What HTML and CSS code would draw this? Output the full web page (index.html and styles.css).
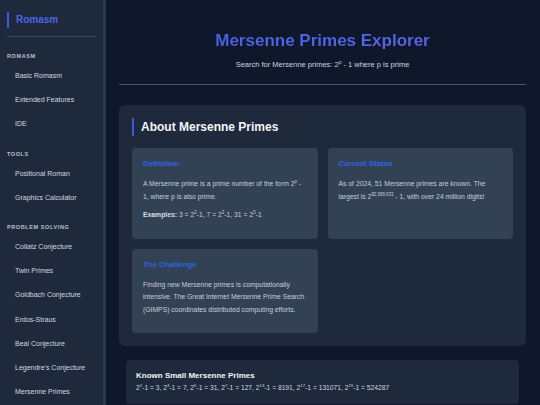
FILE: index.html
```html
<!DOCTYPE html>
<html>
<head>
    <title>Mersenne Primes Explorer</title>
    <link rel="stylesheet" href="styles.css">
</head>
<body>
    <nav class="sidebar">
        <div class="sidebar-header">
            <div class="brand">Romasm</div>
        </div>
        <div class="nav-section">Romasm</div>
        <a class="nav-item" href="#">Basic Romasm</a>
        <a class="nav-item" href="#">Extended Features</a>
        <a class="nav-item" href="#">IDE</a>
        <div class="nav-section">Tools</div>
        <a class="nav-item" href="#">Positional Roman</a>
        <a class="nav-item" href="#">Graphics Calculator</a>
        <div class="nav-section">Problem Solving</div>
        <a class="nav-item" href="#">Collatz Conjecture</a>
        <a class="nav-item" href="#">Twin Primes</a>
        <a class="nav-item" href="#">Goldbach Conjecture</a>
        <a class="nav-item" href="#">Erdos-Straus</a>
        <a class="nav-item" href="#">Beal Conjecture</a>
        <a class="nav-item" href="#">Legendre's Conjecture</a>
        <a class="nav-item" href="#">Mersenne Primes</a>
    </nav>

    <main class="main">
        <header class="page-header">
            <h1>Mersenne Primes Explorer</h1>
            <p class="subtitle">Search for Mersenne primes: 2<sup>p</sup> - 1 where p is prime</p>
        </header>

        <section class="panel">
            <h2 class="panel-title">About Mersenne Primes</h2>
            <div class="card-grid">
                <div class="card">
                    <h3>Definition</h3>
                    <p>A Mersenne prime is a prime number of the form 2<sup>p</sup> - 1, where p is also prime.</p>
                    <p><strong>Examples:</strong> 3 = 2<sup>2</sup>-1, 7 = 2<sup>3</sup>-1, 31 = 2<sup>5</sup>-1</p>
                </div>
                <div class="card">
                    <h3>Current Status</h3>
                    <p>As of 2024, 51 Mersenne primes are known. The largest is 2<sup>82,589,933</sup> - 1, with over 24 million digits!</p>
                </div>
                <div class="card">
                    <h3>The Challenge</h3>
                    <p>Finding new Mersenne primes is computationally intensive. The Great Internet Mersenne Prime Search (GIMPS) coordinates distributed computing efforts.</p>
                </div>
            </div>
        </section>

        <section class="known">
            <h4>Known Small Mersenne Primes</h4>
            <p>2<sup>2</sup>-1 = 3, 2<sup>3</sup>-1 = 7, 2<sup>5</sup>-1 = 31, 2<sup>7</sup>-1 = 127, 2<sup>13</sup>-1 = 8191, 2<sup>17</sup>-1 = 131071, 2<sup>19</sup>-1 = 524287</p>
        </section>
    </main>
</body>
</html>
```

FILE: styles.css
```css
body {
    font-family: "Liberation Sans", Arial, sans-serif;
    margin: 0;
    display: flex;
    height: 100vh;
    overflow: hidden;
    background-color: #0f172a;
    color: #cbd5e1;
}
sup {
    font-size: 0.65em;
    line-height: 0;
}
.sidebar {
    width: 89px;
    flex-shrink: 0;
    padding: 0 7px;
    background-color: #1e293b;
    border-right: 3px solid #2c384c;
    display: flex;
    flex-direction: column;
}
.sidebar-header {
    padding: 12px 0 8px;
    border-bottom: 1px solid #3b4658;
}
.brand {
    border-left: 2px solid #3b5bdb;
    padding-left: 7px;
    line-height: 16px;
    font-size: 10px;
    font-weight: bold;
    color: #4c66e0;
}
.nav-section {
    margin: 13px 0 4px;
    line-height: 8px;
    font-size: 5.5px;
    font-weight: bold;
    text-transform: uppercase;
    letter-spacing: 0.6px;
    color: #b8c2d0;
}
.sidebar-header + .nav-section {
    margin-top: 15px;
}
.nav-item {
    display: block;
    padding-left: 8px;
    line-height: 24.2px;
    font-size: 7px;
    color: #d1d8e2;
    text-decoration: none;
}
.main {
    flex: 1;
    padding: 0 14px 0 13px;
}
.page-header {
    text-align: center;
    padding: 31px 0 14px;
    border-bottom: 1px solid #475569;
}
.page-header h1 {
    margin: 0;
    font-size: 17px;
    line-height: 20px;
    background: linear-gradient(90deg, #3f62e0, #6363e8);
    -webkit-background-clip: text;
    background-clip: text;
    color: transparent;
}
.subtitle {
    margin: 9px 0 0;
    font-size: 7.5px;
    line-height: 10px;
    color: #cbd5e1;
}
.panel {
    margin-top: 20px;
    padding: 13px;
    background-color: #1e293b;
    border-radius: 6px;
}
.panel-title {
    margin: 0 0 12px;
    border-left: 2px solid #3b5bdb;
    padding-left: 7px;
    line-height: 18px;
    font-size: 12px;
    color: #f1f5f9;
}
.card-grid {
    display: grid;
    grid-template-columns: 1fr 1fr;
    gap: 10px;
}
.card {
    background-color: #334155;
    border-radius: 4px;
    padding: 11px 10px 11px 11px;
}
.card h3 {
    margin: 0 0 9px;
    font-size: 7.8px;
    line-height: 10px;
    color: #2f63e0;
}
.card p {
    margin: 0 0 6px;
    font-size: 6.8px;
    line-height: 12.5px;
    color: #c5cedb;
}
.card p strong {
    color: #d6dde7;
}
.known {
    margin: 14px 7px 0;
    padding: 11px 10px;
    background-color: #1e293b;
    border-radius: 4px;
}
.known h4 {
    margin: 0 0 2px;
    font-size: 8px;
    line-height: 10px;
    color: #f1f5f9;
}
.known p {
    margin: 0;
    font-size: 6.7px;
    line-height: 10px;
    color: #d1d8e2;
}
```
